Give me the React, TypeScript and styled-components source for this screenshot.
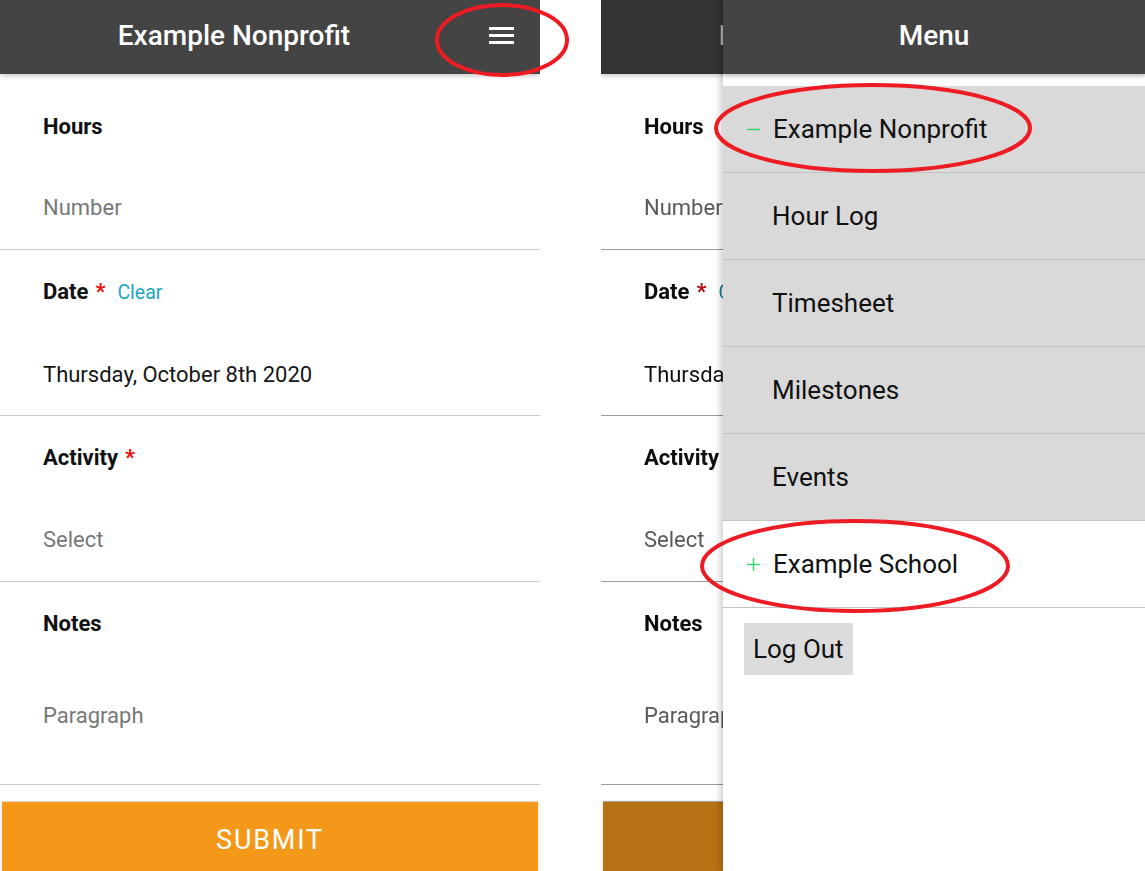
import * as React from 'react'
import styled, { createGlobalStyle } from 'styled-components'

const GlobalStyle = createGlobalStyle`
  html, body {
    margin: 0;
    padding: 0;
    background: #fff;
    font-family: Roboto, 'Liberation Sans', sans-serif;
  }
`

const Canvas = styled.div`
  position: relative;
  display: flex;
  gap: 61px;
  width: 1145px;
  height: 871px;
  overflow: hidden;
`

const Phone = styled.div<{ $width: number }>`
  position: relative;
  display: flex;
  width: ${p => p.$width}px;
  height: 871px;
  overflow: hidden;
  background: #fff;
`

const Screen = styled.div`
  flex: none;
  width: 540px;
`

// the form page peeking out beside the open drawer, dimmed
const Peek = styled.div`
  flex: none;
  width: 122px;
  overflow: hidden;
  filter: brightness(0.75);
`

const Header = styled.div<{ $offset?: number }>`
  position: relative;
  z-index: 1;
  display: flex;
  align-items: center;
  justify-content: center;
  box-sizing: border-box;
  height: 74px;
  padding: 0 ${p => p.$offset || 0}px 4px 0;
  background: #444;
  color: #fff;
  font-size: 28px;
  font-weight: 500;
  white-space: nowrap;
  box-shadow: 0 2px 5px rgba(0, 0, 0, 0.22);
`

const Burger = styled.div`
  position: absolute;
  right: 26px;
  top: 27px;
  display: flex;
  flex-direction: column;
  gap: 4px;

  span {
    display: block;
    width: 25px;
    height: 3px;
    background: #fff;
  }
`

const Section = styled.div<{ $top: number; $bottom: number }>`
  padding: ${p => p.$top}px 43px ${p => p.$bottom}px;
  border-bottom: 1px solid #cdcdcd;
`

const Label = styled.div`
  display: flex;
  align-items: baseline;
  font-size: 22px;
  line-height: 24px;
  font-weight: 700;
  color: #111;
  white-space: nowrap;
`

const Star = styled.span`
  margin-left: 7px;
  color: #f01010;
`

const ClearLink = styled.span`
  margin-left: 12px;
  font-size: 19.5px;
  font-weight: 400;
  color: #1ba6c6;
`

const Value = styled.div<{ $gap: number; $placeholder?: boolean }>`
  margin-top: ${p => p.$gap}px;
  font-size: 22px;
  line-height: 24px;
  color: ${p => (p.$placeholder ? '#777' : '#161616')};
  white-space: nowrap;
`

const Submit = styled.div`
  display: flex;
  align-items: center;
  justify-content: center;
  height: 76px;
  margin: 16px 2px 0;
  background: #f4981a;
  border-top: 1px solid #e2d9cc;
  color: #fff;
  font-size: 27px;
  letter-spacing: 1.8px;
  box-shadow: 0 1px 3px rgba(0, 0, 0, 0.2);
`

const Drawer = styled.div`
  position: relative;
  z-index: 2;
  flex: 1;
  background: #fff;
  box-shadow: -3px 0 6px rgba(0, 0, 0, 0.18);
`

const DrawerBody = styled.div`
  padding-top: 12px;
  background: linear-gradient(#ececec, #fff 4px);
`

const MenuItem = styled.div<{ $grey?: boolean }>`
  display: flex;
  align-items: center;
  box-sizing: border-box;
  height: 87px;
  padding-left: 49px;
  background: ${p => (p.$grey ? '#d9d9d9' : '#fff')};
  border-bottom: 1px solid #c3c3c3;
  font-size: 26px;
  color: #111;
  white-space: nowrap;
`

const Toggle = styled.svg`
  flex: none;
  margin: 0 13px 0 -25px;
`

const LogOut = styled.div`
  display: inline-block;
  margin: 15px 0 0 21px;
  padding: 0 9px;
  height: 52px;
  line-height: 52px;
  background: #dcdcdc;
  font-size: 26px;
  color: #111;
`

const Marks = styled.svg`
  position: absolute;
  inset: 0;
  z-index: 5;
  pointer-events: none;
`

const ToggleIcon = ({ open }: { open?: boolean }) => (
  <Toggle width="13" height="13" viewBox="0 0 13 13">
    <g stroke="#34d26c" strokeWidth="1.4">
      <line x1="0" y1="6.5" x2="13" y2="6.5" />
      {!open && <line x1="6.5" y1="0" x2="6.5" y2="13" />}
    </g>
  </Toggle>
)

const FormScreen = ({ withMenu }: { withMenu?: boolean }) => (
  <Screen>
    <Header $offset={72}>
      Example Nonprofit
      {withMenu && (
        <Burger>
          <span />
          <span />
          <span />
        </Burger>
      )}
    </Header>
    <Section $top={41} $bottom={29}>
      <Label>Hours</Label>
      <Value $gap={57} $placeholder>Number</Value>
    </Section>
    <Section $top={30} $bottom={28}>
      <Label>
        Date<Star>*</Star>
        <ClearLink>Clear</ClearLink>
      </Label>
      <Value $gap={58}>Thursday, October 8th 2020</Value>
    </Section>
    <Section $top={30} $bottom={29}>
      <Label>
        Activity<Star>*</Star>
      </Label>
      <Value $gap={58} $placeholder>Select</Value>
    </Section>
    <Section $top={30} $bottom={56}>
      <Label>Notes</Label>
      <Value $gap={68} $placeholder>Paragraph</Value>
    </Section>
    <Submit>SUBMIT</Submit>
  </Screen>
)

const menu = ['Hour Log', 'Timesheet', 'Milestones', 'Events']

export default function App() {
  return (
    <>
      <GlobalStyle />
      <Canvas>
        <Phone $width={540}>
          <FormScreen withMenu />
        </Phone>

        <Phone $width={544}>
          <Peek>
            <FormScreen />
          </Peek>
          <Drawer>
            <Header>Menu</Header>
            <DrawerBody>
              <MenuItem $grey>
                <ToggleIcon open />
                Example Nonprofit
              </MenuItem>
              {menu.map(m => (
                <MenuItem $grey key={m}>
                  {m}
                </MenuItem>
              ))}
              <MenuItem>
                <ToggleIcon />
                Example School
              </MenuItem>
              <LogOut>Log Out</LogOut>
            </DrawerBody>
          </Drawer>
        </Phone>

        <Marks width="1145" height="871">
          <g fill="none" stroke="#ed1c24" strokeWidth="4">
            <ellipse cx="502" cy="40" rx="65" ry="35" />
            <ellipse cx="873" cy="128" rx="157" ry="43" />
            <ellipse cx="855" cy="566" rx="153" ry="45" />
          </g>
        </Marks>
      </Canvas>
    </>
  )
}
